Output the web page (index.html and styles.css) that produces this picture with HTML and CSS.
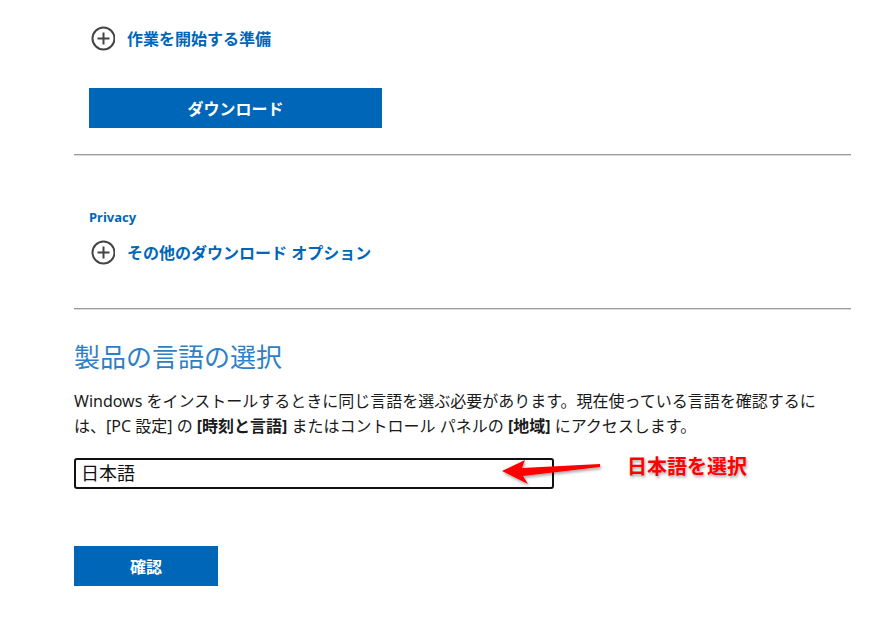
FILE: index.html
```html
<!DOCTYPE html>
<html lang="ja">
<head>
    <meta charset="UTF-8">
    <meta name="viewport" content="width=device-width, initial-scale=1.0">
    <title>Windows のダウンロード</title>
    <link rel="stylesheet" href="styles.css">
</head>
<body>
    <div class="page">
        <div class="download-box">
            <div class="expand-row">
                <svg class="plus-icon" width="26" height="26" viewBox="0 0 26 26">
                    <circle cx="14.5" cy="12.5" r="11" fill="none" stroke="#444" stroke-width="2"/>
                    <path d="M14.5 6.5v12M8.5 12.5h12" stroke="#444" stroke-width="2"/>
                </svg>
                <span>作業を開始する準備</span>
            </div>
            <button class="download-btn">ダウンロード</button>
        </div>

        <hr class="divider">

        <div class="options-box">
            <a class="privacy-link" href="#">Privacy</a>
            <div class="expand-row">
                <svg class="plus-icon" width="26" height="26" viewBox="0 0 26 26">
                    <circle cx="14.5" cy="12.5" r="11" fill="none" stroke="#444" stroke-width="2"/>
                    <path d="M14.5 6.5v12M8.5 12.5h12" stroke="#444" stroke-width="2"/>
                </svg>
                <span>その他のダウンロード オプション</span>
            </div>
        </div>

        <hr class="divider divider-lower">

        <div class="language-section">
            <h2>製品の言語の選択</h2>
            <p class="lang-text">Windows をインストールするときに同じ言語を選ぶ必要があります。現在使っている言語を確認するには、[PC 設定] の <b>[時刻と言語]</b> またはコントロール パネルの <b>[地域]</b> にアクセスします。</p>

            <div class="select-wrap">
                <div class="lang-select">日本語</div>

                <!-- annotation arrow -->
                <svg class="note-arrow" width="110" height="34" viewBox="0 0 110 34">
                    <defs>
                        <filter id="shadow" x="-20%" y="-50%" width="140%" height="200%">
                            <feDropShadow dx="1" dy="2" stdDeviation="1.5" flood-color="#000" flood-opacity="0.35"/>
                        </filter>
                    </defs>
                    <polygon points="2,14 25,3 22,11 100,7 100,10 23,19 28,27" fill="#ff0000" filter="url(#shadow)"/>
                </svg>
                <span class="note-text">日本語を選択</span>
            </div>

            <button class="confirm-btn">確認</button>
        </div>
    </div>
</body>
</html>
```

FILE: styles.css
```css
* {
    margin: 0;
    padding: 0;
    box-sizing: border-box;
}

body {
    background: #fff;
    color: #1a1a1a;
    font-family: "Noto Sans", "Noto Sans CJK JP", sans-serif;
    overflow: hidden;
}

.page {
    width: 777px;
    margin-left: 74px;
}

.download-box {
    padding: 26px 0 0 15px;
}

.expand-row {
    display: flex;
    align-items: center;
    height: 24px;
    gap: 12px;
    color: #0067b8;
    font-size: 16px;
    font-weight: 700;
}

.plus-icon {
    flex-shrink: 0;
    margin-top: 1px;
}

.download-btn {
    display: block;
    width: 293px;
    height: 40px;
    margin-top: 38px;
    border: none;
    background: #0067b8;
    color: #fff;
    font-family: inherit;
    font-size: 16px;
    font-weight: 700;
}

.divider {
    border: none;
    border-top: 1px solid #999;
    border-bottom: 1px solid #dcdcdc;
    margin-top: 26px;
}

.options-box {
    padding: 52px 0 0 15px;
}

.privacy-link {
    display: block;
    height: 18px;
    line-height: 18px;
    color: #0067b8;
    font-size: 13px;
    font-weight: 700;
    text-decoration: none;
    margin-bottom: 14px;
}

.divider-lower {
    margin-top: 44px;
}

.language-section h2 {
    margin-top: 29px;
    font-size: 26px;
    line-height: 36px;
    font-weight: 400;
    color: #2f7fc6;
}

.lang-text {
    margin-top: 14px;
    font-size: 16px;
    line-height: 25px;
    padding-right: 6px;
}

.lang-text b {
    font-weight: 700;
}

.select-wrap {
    position: relative;
    margin-top: 19px;
}

.lang-select {
    width: 480px;
    height: 31px;
    border: 2px solid #111;
    border-radius: 3px;
    padding-left: 5px;
    font-size: 18px;
    line-height: 27px;
    color: #111;
}

.note-arrow {
    position: absolute;
    left: 426px;
    top: -1px;
}

.note-text {
    position: absolute;
    left: 553px;
    top: -3px;
    color: #ff0000;
    font-size: 20px;
    font-weight: 700;
    line-height: 24px;
    text-shadow: 1px 2px 3px rgba(0, 0, 0, 0.35);
}

.confirm-btn {
    display: block;
    width: 144px;
    height: 40px;
    margin-top: 57px;
    border: none;
    background: #0067b8;
    color: #fff;
    font-family: inherit;
    font-size: 16px;
    font-weight: 700;
}
```
